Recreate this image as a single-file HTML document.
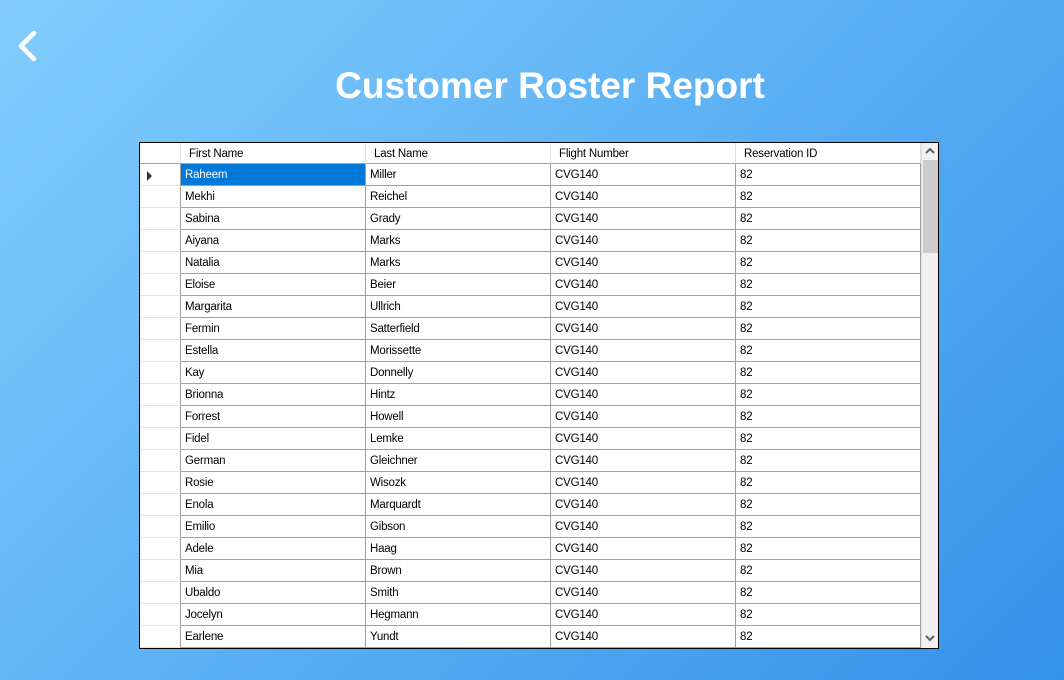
<!DOCTYPE html><html><head><style>
*{margin:0;padding:0;box-sizing:border-box}
body{width:1064px;height:680px;overflow:hidden;background:linear-gradient(135deg,#82cdfc 0%,#5fb3f5 45%,#3592ea 100%);font-family:"Liberation Sans",sans-serif;position:relative}
h1{position:absolute;left:0;width:1100px;top:65px;text-align:center;color:#fff;font-size:37px;font-weight:bold;letter-spacing:0px}
.grid{position:absolute;left:139px;top:142px;width:800px;height:507px;border:1px solid #000;background:#fff;overflow:hidden}
.row{position:absolute;left:0;height:22px;width:781px;font-size:11.5px;letter-spacing:-0.2px;color:#000}
.c{position:absolute;top:0;height:22px;line-height:23px;padding-left:4px;border-right:1px solid #a0a0a0;border-bottom:1px solid #a0a0a0;white-space:nowrap;overflow:hidden}
.hd .c{border-bottom:1px solid #a0a0a0;padding-left:8px;border-right:1px solid #e0e0e0;line-height:22px}
.rh{left:0;width:41px;border-bottom-color:#e3e3e3}
.c1{left:41px;width:185px}.c2{left:226px;width:185px}.c3{left:411px;width:185px}.c4{left:596px;width:185px}
.sel{background:#0078d7;color:#fff}
.sb{position:absolute;left:781px;top:0;width:17px;height:505px;background:#f0f0f0;border-left:1px solid #e0e0e0}
.th{position:absolute;left:1px;top:17px;width:15px;height:93px;background:#cdcdcd}
</style></head><body>
<svg style="position:absolute;left:16px;top:30px" width="24" height="32" viewBox="0 0 24 32"><path d="M18 3 L5 16 L18 29" stroke="#fff" stroke-width="4.5" fill="none" stroke-linecap="round" stroke-linejoin="round"/></svg>
<h1>Customer Roster Report</h1>
<div class="grid">
<div class="row hd" style="top:0;height:21px"><div class="c rh" style="height:21px"></div><div class="c c1" style="height:21px">First Name</div><div class="c c2" style="height:21px">Last Name</div><div class="c c3" style="height:21px">Flight Number</div><div class="c c4" style="height:21px">Reservation ID</div></div>
<div id="rows"></div>
<div class="sb"><div class="th"></div>
<svg style="position:absolute;left:3px;top:4px" width="10" height="7"><path d="M1 6 L5 2 L9 6" stroke="#606060" stroke-width="2" fill="none"/></svg>
<svg style="position:absolute;left:3px;top:492px" width="10" height="7"><path d="M1 1 L5 5 L9 1" stroke="#606060" stroke-width="2" fill="none"/></svg>
</div>
</div>
<script>
var d=[["Raheem","Miller"],["Mekhi","Reichel"],["Sabina","Grady"],["Aiyana","Marks"],["Natalia","Marks"],["Eloise","Beier"],["Margarita","Ullrich"],["Fermin","Satterfield"],["Estella","Morissette"],["Kay","Donnelly"],["Brionna","Hintz"],["Forrest","Howell"],["Fidel","Lemke"],["German","Gleichner"],["Rosie","Wisozk"],["Enola","Marquardt"],["Emilio","Gibson"],["Adele","Haag"],["Mia","Brown"],["Ubaldo","Smith"],["Jocelyn","Hegmann"],["Earlene","Yundt"],["",""]];
var h="";d.forEach(function(r,i){h+='<div class="row" style="top:'+(21+i*22)+'px"><div class="c rh">'+(i==0?'<svg style="position:absolute;left:7px;top:7px" width="6" height="10"><path d="M0 0 L5 5 L0 10Z" fill="#333"/></svg>':'')+'</div><div class="c c1'+(i==0?' sel':'')+'">'+r[0]+'</div><div class="c c2">'+r[1]+'</div><div class="c c3">'+(r[0]?'CVG140':'')+'</div><div class="c c4">'+(r[0]?'82':'')+'</div></div>'});
document.getElementById("rows").innerHTML=h;
</script>
</body></html>
